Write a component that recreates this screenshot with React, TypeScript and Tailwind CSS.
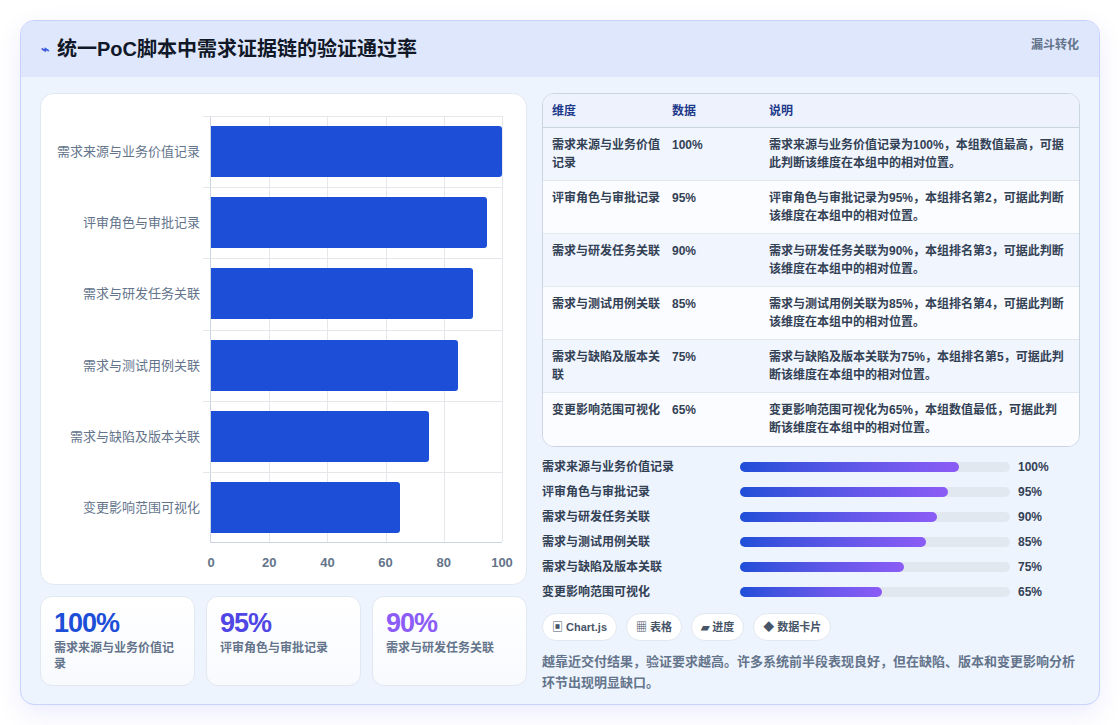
import React from "react";

const data = [
  { n: "需求来源与业务价值记录", v: 100, d: "需求来源与业务价值记录为100%，本组数值最高，可据此判断该维度在本组中的相对位置。" },
  { n: "评审角色与审批记录", v: 95, d: "评审角色与审批记录为95%，本组排名第2，可据此判断该维度在本组中的相对位置。" },
  { n: "需求与研发任务关联", v: 90, d: "需求与研发任务关联为90%，本组排名第3，可据此判断该维度在本组中的相对位置。" },
  { n: "需求与测试用例关联", v: 85, d: "需求与测试用例关联为85%，本组排名第4，可据此判断该维度在本组中的相对位置。" },
  { n: "需求与缺陷及版本关联", v: 75, d: "需求与缺陷及版本关联为75%，本组排名第5，可据此判断该维度在本组中的相对位置。" },
  { n: "变更影响范围可视化", v: 65, d: "变更影响范围可视化为65%，本组数值最低，可据此判断该维度在本组中的相对位置。" },
];

const font = { fontFamily: '"Liberation Sans", "Noto Sans CJK SC", sans-serif' };

export default function App() {
  return (
    <div className="w-[1120px] h-[725px] bg-white pt-[20px] px-[20px]" style={font}>
      <div className="w-[1080px] h-[685px] rounded-[14px] border border-[#c7d2fe] bg-[#eef4fe] overflow-hidden shadow-[0_8px_24px_rgba(99,102,241,0.12)]">
        <div className="h-[56px] bg-[#dfe7fd] flex items-center justify-between px-[20px]">
          <div className="flex items-center gap-[8px]">
            <span className="text-[#3b5bdb] text-[14px] font-bold">⌁</span>
            <span className="text-[20px] font-bold text-[#111827]">统一PoC脚本中需求证据链的验证通过率</span>
          </div>
          <span className="text-[12px] font-bold text-[#64748b] self-start mt-[15px]">漏斗转化</span>
        </div>
        <div className="flex gap-[15px] px-[19px] pt-[16px]">
          <div className="w-[487px] flex flex-col gap-[11px]">
            <div className="h-[492px] bg-white rounded-[14px] border border-[#e2e8f0] relative">
              <div className="absolute left-[169px] top-[22px] w-[292px] h-[427px] border-l border-b border-[#cbd5e1]">
                {[1, 2, 3, 4, 5].map(i => (
                  <div key={i} className="absolute top-0 bottom-0 border-l border-[#e5e7eb]" style={{ left: `${i * 20}%` }} />
                ))}
                {[0, 1, 2, 3, 4, 5].map(i => (
                  <div key={i} className="absolute left-[-8px] right-0 border-t border-[#e5e7eb]" style={{ top: i * 71.2 }} />
                ))}
                {data.map((d, i) => (
                  <div key={i} className="absolute left-0 h-[51px] bg-[#1d4ed8] rounded-r-[3px]" style={{ top: i * 71.2 + 10, width: `${d.v}%` }} />
                ))}
                {data.map((d, i) => (
                  <div key={i} className="absolute right-[302px] text-[13px] text-[#64748b] whitespace-nowrap" style={{ top: i * 71.2 + 26 }}>{d.n}</div>
                ))}
                {[0, 20, 40, 60, 80, 100].map((t, i) => (
                  <div key={t} className="absolute top-[437px] text-[13px] font-bold text-[#64748b] -translate-x-1/2" style={{ left: `${i * 20}%` }}>{t}</div>
                ))}
              </div>
            </div>
            <div className="flex gap-[11px]">
              {[["100%", "#1d4ed8", data[0].n], ["95%", "#4f46e5", data[1].n], ["90%", "#8b5cf6", data[2].n]].map(([v, c, n]) => (
                <div key={v} className="flex-1 h-[90px] bg-gradient-to-b from-white to-[#f8fafe] rounded-[12px] border border-[#e2e8f0] px-[13px] pt-[10px]">
                  <div className="text-[27px] font-bold leading-[32px] tracking-[-1px]" style={{ color: c }}>{v}</div>
                  <div className="text-[12px] font-bold text-[#64748b] leading-[16px] mt-[1px]">{n}</div>
                </div>
              ))}
            </div>
          </div>
          <div className="flex-1 flex flex-col">
            <div className="bg-white rounded-[12px] border border-[#cbd5e1] overflow-hidden">
              <div className="flex h-[34px] items-center bg-[#eef2fd] border-b border-[#cbd5e1] text-[12px] font-bold text-[#1e3a8a]">
                <div className="w-[129px] pl-[9px]">维度</div>
                <div className="w-[97px]">数据</div>
                <div>说明</div>
              </div>
              {data.map((d, i) => (
                <div key={i} className={`flex h-[53px] pt-[8px] text-[12px] font-bold text-[#334155] leading-[18px] ${i < 5 ? "border-b border-[#e2e8f0]" : ""} ${i % 2 === 0 ? "bg-[#f0f5fe]" : "bg-[#fafcff]"}`}>
                  <div className="w-[129px] pl-[9px] pr-[12px]">{d.n}</div>
                  <div className="w-[97px]">{d.v}%</div>
                  <div className="flex-1 pr-[12px]">{d.d}</div>
                </div>
              ))}
            </div>
            <div className="flex flex-col gap-[7px] mt-[11px]">
              {data.map((d, i) => (
                <div key={i} className="flex items-center h-[18px] text-[12px] font-bold text-[#334155]">
                  <div className="w-[198px]">{d.n}</div>
                  <div className="w-[270px] h-[10px] rounded-full bg-[#e2e8f0]">
                    <div className="h-full rounded-full bg-gradient-to-r from-[#1d4ed8] to-[#8b5cf6]" style={{ width: `${d.v * 0.81}%` }} />
                  </div>
                  <div className="ml-[8px]">{d.v}%</div>
                </div>
              ))}
            </div>
            <div className="flex gap-[9px] mt-[12px]">
              {["▣ Chart.js", "▦ 表格", "▰ 进度", "◆ 数据卡片"].map(c => (
                <div key={c} className="h-[28px] px-[9px] flex items-center rounded-full bg-white border border-[#e2e8f0] text-[11px] font-bold text-[#475569]">{c}</div>
              ))}
            </div>
            <p className="mt-[10px] text-[13px] leading-[21px] text-[#64748b] font-bold">越靠近交付结果，验证要求越高。许多系统前半段表现良好，但在缺陷、版本和变更影响分析环节出现明显缺口。</p>
          </div>
        </div>
      </div>
    </div>
  );
}
